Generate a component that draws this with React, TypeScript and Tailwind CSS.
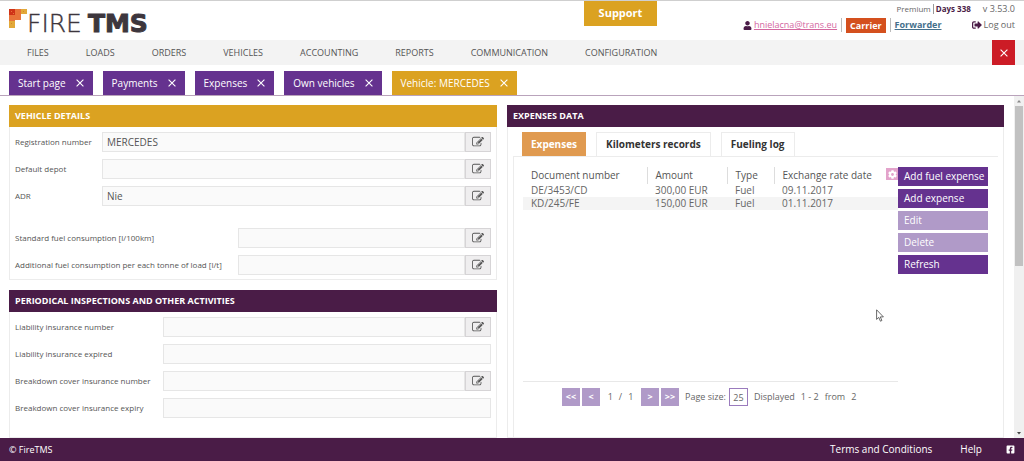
import { useState } from "react";
import { FaUser, FaSignOutAlt, FaCog, FaFacebookSquare } from "react-icons/fa";

const MENU = [
  "FILES",
  "LOADS",
  "ORDERS",
  "VEHICLES",
  "ACCOUNTING",
  "REPORTS",
  "COMMUNICATION",
  "CONFIGURATION",
];

const OPEN_TABS = ["Start page", "Payments", "Expenses", "Own vehicles", "Vehicle: MERCEDES"];

const DATA_TABS = ["Expenses", "Kilometers records", "Fueling log"];

const EXPENSES = [
  { doc: "DE/3453/CD", amount: "300,00 EUR", type: "Fuel", date: "09.11.2017" },
  { doc: "KD/245/FE", amount: "150,00 EUR", type: "Fuel", date: "01.11.2017" },
];

const ACTIONS = [
  { label: "Add fuel expense", disabled: false },
  { label: "Add expense", disabled: false },
  { label: "Edit", disabled: true },
  { label: "Delete", disabled: true },
  { label: "Refresh", disabled: false },
];

function Cross({ className = "" }: { className?: string }) {
  return (
    <svg viewBox="0 0 8 8" className={`h-2 w-2 ${className}`} stroke="currentColor" strokeWidth="1.1" fill="none">
      <path d="M0.6 0.6 7.4 7.4M7.4 0.6 0.6 7.4" />
    </svg>
  );
}

function EditIcon() {
  return (
    <svg viewBox="0 0 1792 1792" className="h-3 w-3" fill="currentColor">
      <path d="M888 1184l116-116-152-152-116 116v56h96v96h56zm440-720q-16-16-33 1l-350 350q-17 17-1 33t33-1l350-350q17-17 1-33zm80 594v190q0 119-84.5 203.5t-203.5 84.5h-832q-119 0-203.5-84.5t-84.5-203.5v-832q0-119 84.5-203.5t203.5-84.5h832q63 0 117 25 15 7 18 23 3 17-9 29l-49 49q-14 14-32 8-23-6-45-6h-832q-66 0-113 47t-47 113v832q0 66 47 113t113 47h832q66 0 113-47t47-113v-126q0-13 9-22l64-64q15-15 35-7t20 29zm-96-738l288 288-672 672h-288v-288zm444 132l-92 92-288-288 92-92q28-28 68-28t68 28l152 152q28 28 28 68t-28 68z" />
    </svg>
  );
}

function Logo() {
  return (
    <a href="#" aria-label="FireTMS" className="flex items-start text-[#3d363d]">
      <svg viewBox="0 0 18 19" className="h-[19px] w-[18px]">
        <path d="M0 0h18v5h-6v6H6v8H0z" fill="#e2a93a" />
        <path d="M0 0h12v6H6v6H0z" fill="#e8743a" />
        <path d="M0 0h6v6H0z" fill="#cf3318" />
        <path d="M6 6h6v5H6z" fill="#e8743a" />
        <path d="M2 2h1v1H2zM4 4h1v1H4z" fill="#e8743a" />
        <path d="M2 14h1v1H2zM14 2h1v1h-1z" fill="#d8862a" />
      </svg>
      <span className="flex items-baseline gap-1.5 font-['DejaVu_Sans'] text-[25px] leading-[30px]">
        <span className="font-extralight [-webkit-text-stroke:0.4px_#3d363d]">FIRE</span>
        <span className="font-bold [-webkit-text-stroke:1px_#3d363d]">TMS</span>
      </span>
    </a>
  );
}

function Panel({
  title,
  accent = false,
  className = "",
  children,
}: {
  title: string;
  accent?: boolean;
  className?: string;
  children: React.ReactNode;
}) {
  return (
    <section className={`flex min-w-0 flex-col ${className}`}>
      <h2
        className={`h-[22px] shrink-0 px-1.5 text-[9px] leading-[22px] font-bold text-white ${
          accent ? "bg-[#dba221]" : "bg-[#4a1c47]"
        }`}
      >
        {title}
      </h2>
      <div className="grow border border-t-0 border-[#ececec] px-[5px] pt-[5px]">{children}</div>
    </section>
  );
}

function Field({
  id,
  label,
  value = "",
  editable = true,
  cols,
}: {
  id: string;
  label: string;
  value?: string;
  editable?: boolean;
  cols: string;
}) {
  return (
    <div className={`grid items-center ${cols}`}>
      <label htmlFor={id} className="text-[8px] whitespace-nowrap text-[#555]">
        {label}
      </label>
      <div className="flex h-5">
        <input
          id={id}
          readOnly
          defaultValue={value}
          className="min-w-0 grow border border-[#e6e6e6] bg-[#fafafa] px-1 text-[10px] text-[#555] outline-none"
        />
        {editable && (
          <button
            type="button"
            aria-label={`Edit ${label}`}
            className="flex w-[26px] items-center justify-center border border-[#d6d4d6] bg-[#efeeef] text-[#555]"
          >
            <EditIcon />
          </button>
        )}
      </div>
    </div>
  );
}

function Header() {
  return (
    <header className="flex h-10 shrink-0 items-start border-t border-[#cfcfcf] pr-[9px] pl-[9px]">
      <div className="flex-1 pt-2">
        <Logo />
      </div>
      <button type="button" className="h-[25px] w-[73px] bg-[#dba221] text-[11px] font-bold text-white">
        Support
      </button>
      <div className="flex w-[358px] flex-col text-[#666]">
        <div className="flex h-4 items-center justify-end text-[8px]">
          <span>Premium</span>
          <span className="ml-0.5 border-l border-[#999] pl-0.5 leading-[10px] font-bold text-[#4a1c47]">Days 338</span>
          <span className="ml-3 text-[9px]">v 3.53.0</span>
        </div>
        <div className="flex h-4 items-center justify-end text-[9px]">
          <FaUser size={9} className="mr-0.5 text-[#4a1c47]" />
          <a href="#" className="text-[#d4679f] underline">
            hnielacna@trans.eu
          </a>
          <span className="mx-1 h-[14px] w-px bg-[#bbb]" />
          <a href="#" className="bg-[#d4501e] px-1 leading-[15px] font-bold text-white">
            Carrier
          </a>
          <span className="mx-1 h-[14px] w-px bg-[#bbb]" />
          <a href="#" className="font-bold text-[#44708c] underline">
            Forwarder
          </a>
          <a href="#" className="ml-[30px] flex items-center gap-0.5">
            <FaSignOutAlt size={10} className="text-[#4a1c47]" />
            Log out
          </a>
        </div>
      </div>
    </header>
  );
}

function ExpensesData() {
  const [tab, setTab] = useState(DATA_TABS[0]);

  return (
    <Panel title="EXPENSES DATA">
      <div className="flex h-6 gap-2.5 px-[9px]">
        {DATA_TABS.map((name) => (
          <button
            key={name}
            type="button"
            onClick={() => setTab(name)}
            className={`px-[9px] text-[10px] font-bold ${
              tab === name ? "bg-[#e09a50] text-white" : "border border-b-0 border-[#ececec] text-[#333]"
            }`}
          >
            {name}
          </button>
        ))}
      </div>

      <div className="h-full border-t border-l border-[#ececec] pt-2.5 pr-2.5 pl-[9px]">
        <div className="flex h-[215px] items-start">
          <div className="flex h-full flex-1 items-start border-b border-[#e8e8e8]">
            <table className="w-full table-fixed text-left text-[10px] text-[#666]">
              <thead>
                <tr className="h-[17px] text-[#555]">
                  <th className="w-[124px] pl-2 font-normal">Document number</th>
                  <th className="w-20 border-l border-[#ddd] pl-2 font-normal">Amount</th>
                  <th className="w-[47px] border-l border-[#ddd] pl-2 font-normal">Type</th>
                  <th className="border-l border-[#ddd] p-0 font-normal">
                    <span className="flex items-start justify-between pl-2">
                      Exchange rate date
                      <button
                        type="button"
                        aria-label="Table settings"
                        className="flex h-3 w-3 items-center justify-center bg-[#e3a3cb] text-white"
                      >
                        <FaCog size={9} />
                      </button>
                    </span>
                  </th>
                </tr>
              </thead>
              <tbody>
                {EXPENSES.map((row) => (
                  <tr key={row.doc} className="h-[13px] leading-[13px] even:bg-[#f4f4f4]">
                    <td className="pl-2">{row.doc}</td>
                    <td className="pl-2">{row.amount}</td>
                    <td className="pl-2">{row.type}</td>
                    <td className="pl-2">{row.date}</td>
                  </tr>
                ))}
              </tbody>
            </table>
          </div>
          <div className="flex w-[90px] flex-col gap-[3px]">
            {ACTIONS.map((action) => (
              <button
                key={action.label}
                type="button"
                disabled={action.disabled}
                className="h-[19px] bg-[#65328f] px-1.5 text-left text-[10px] whitespace-nowrap text-white disabled:bg-[#b09ac8]"
              >
                {action.label}
              </button>
            ))}
          </div>
        </div>

        {/* pagination */}
        <div className="mt-1.5 flex items-center pl-[39px] text-[9px] text-[#666]">
          <div className="flex gap-0.5">
            <PageButton label="<<" />
            <PageButton label="<" />
          </div>
          <span className="flex w-[41px] justify-center gap-1.5">
            <span>1</span>
            <span>/</span>
            <span>1</span>
          </span>
          <div className="flex gap-0.5">
            <PageButton label=">" />
            <PageButton label=">>" />
          </div>
          <label htmlFor="page-size" className="ml-1.5">
            Page size:
          </label>
          <input
            id="page-size"
            defaultValue="25"
            className="ml-[3px] h-[18px] w-[19px] border border-[#9a7bbd] text-center outline-none"
          />
          <span className="ml-1.5 flex gap-1.5">
            <span>Displayed</span>
            <span>1 - 2</span>
            <span>from</span>
            <span>2</span>
          </span>
        </div>
      </div>
    </Panel>
  );
}

function PageButton({ label }: { label: string }) {
  return (
    <button type="button" className="h-[18px] w-[18px] bg-[#b09ac8] leading-[18px] font-bold text-white">
      {label}
    </button>
  );
}

export default function App() {
  const [active, setActive] = useState("Vehicle: MERCEDES");

  return (
    <div className="relative flex h-screen flex-col overflow-hidden bg-white font-['Open_Sans',sans-serif]">
      <Header />

      {/* main menu */}
      <nav className="flex h-[25px] shrink-0 items-center gap-px bg-[#f3f3f3] pr-[9px] pl-[9px]">
        {MENU.map((item) => (
          <a key={item} href="#" className="px-[18px] text-[9px] text-[#555]">
            {item}
          </a>
        ))}
        <button
          type="button"
          aria-label="Close"
          className="ml-auto flex h-full w-[23px] items-center justify-center bg-[#cc1c26] text-white"
        >
          <Cross />
        </button>
      </nav>

      {/* opened pages */}
      <div className="flex h-[31px] shrink-0 items-end gap-2.5 border-b border-[#b9a3bb] pl-[9px]">
        {OPEN_TABS.map((name) => (
          <div
            key={name}
            className={`flex h-6 items-center gap-2.5 px-[9px] text-[10px] text-white ${
              active === name ? "bg-[#dba221]" : "bg-[#65328f]"
            }`}
          >
            <button type="button" onClick={() => setActive(name)}>
              {name}
            </button>
            <button type="button" aria-label={`Close ${name}`}>
              <Cross />
            </button>
          </div>
        ))}
      </div>

      <div className="flex min-h-0 flex-1">
        <main className="grid min-w-0 flex-1 grid-cols-[488fr_497fr] gap-2.5 overflow-hidden pt-[9px] pr-2.5 pl-[9px]">
          <div className="flex min-w-0 flex-col gap-2.5">
            <Panel title="VEHICLE DETAILS" accent>
              <div className="flex flex-col gap-[7px] pb-1">
                <Field id="reg" label="Registration number" value="MERCEDES" cols="grid-cols-[87px_1fr]" />
                <Field id="depot" label="Default depot" cols="grid-cols-[87px_1fr]" />
                <Field id="adr" label="ADR" value="Nie" cols="grid-cols-[87px_1fr]" />
                <div className="mt-[15px] flex flex-col gap-[7px]">
                  <Field id="std" label="Standard fuel consumption [l/100km]" cols="grid-cols-[223px_1fr]" />
                  <Field
                    id="add"
                    label="Additional fuel consumption per each tonne of load [l/t]"
                    cols="grid-cols-[223px_1fr]"
                  />
                </div>
              </div>
            </Panel>
            <Panel title="PERIODICAL INSPECTIONS AND OTHER ACTIVITIES" className="grow">
              <div className="flex flex-col gap-[7px]">
                <Field id="lin" label="Liability insurance number" cols="grid-cols-[148px_1fr]" />
                <Field id="lie" label="Liability insurance expired" editable={false} cols="grid-cols-[148px_1fr]" />
                <Field id="bcn" label="Breakdown cover insurance number" cols="grid-cols-[148px_1fr]" />
                <Field
                  id="bce"
                  label="Breakdown cover insurance expiry"
                  editable={false}
                  cols="grid-cols-[148px_1fr]"
                />
              </div>
            </Panel>
          </div>
          <ExpensesData />
        </main>

        {/* scrollbar */}
        <div className="flex w-2.5 flex-col items-center justify-between bg-[#f0f0f0]">
          <div className="flex w-full flex-col items-center">
            <svg viewBox="0 0 10 10" className="h-2.5 w-2.5">
              <path d="M3 6.5 5 4l2 2.5z" fill="#888" />
            </svg>
            <div className="h-40 w-2 bg-[#c1c1c1]" />
          </div>
          <svg viewBox="0 0 10 10" className="h-2.5 w-2.5">
            <path d="M3 4h4L5 6.5z" fill="#444" />
          </svg>
        </div>
      </div>

      <footer className="flex h-[23px] shrink-0 items-center bg-[#4a1c47] px-[9px] text-[10px] text-white">
        <span className="text-[9px]">© FireTMS</span>
        <a href="#" className="ml-auto">
          Terms and Conditions
        </a>
        <a href="#" className="ml-7">
          Help
        </a>
        <a href="#" aria-label="Facebook" className="ml-6">
          <FaFacebookSquare size={9} />
        </a>
      </footer>

      {/* mouse pointer */}
      <svg viewBox="0 0 8 13" className="absolute top-[309px] left-[876px] h-[13px] w-2" fill="#fff" stroke="#444" strokeWidth="0.8">
        <path d="M0.6 0.8v9.6l2.2-2 1.6 3.8 1.5-.7-1.6-3.6h3.1z" />
      </svg>
    </div>
  );
}
